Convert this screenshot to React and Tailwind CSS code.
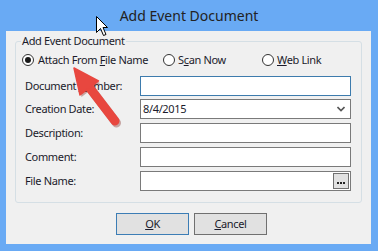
import React from "react";

function Radio({ checked }) {
  return (
    <span className="w-[12px] h-[12px] rounded-full border border-[#333] bg-white flex items-center justify-center shrink-0">
      {checked && <span className="w-[6px] h-[6px] rounded-full bg-[#1a1a1a]" />}
    </span>
  );
}

function Row({ label, mt, children }) {
  return (
    <div className={`flex items-center h-[20px] ${mt}`}>
      <div className="w-[124px] pl-[9px] leading-[20px] whitespace-nowrap">{label}</div>
      {children}
    </div>
  );
}

export default function App() {
  return (
    <div
      className="w-[378px] h-[251px] bg-[#69aaf4] flex flex-col relative overflow-hidden text-[11px] tracking-[-0.35px] text-[#1b1b2b] whitespace-nowrap"
      style={{ fontFamily: '"Noto Sans", "Open Sans", sans-serif' }}
    >
      <div className="h-[31px] flex items-center justify-center text-[14px] tracking-normal text-[#222] pb-[1px]">
        Add Event Document
      </div>
      <div className="ml-[6px] mr-[7px] h-[213px] bg-[#f0f0f0] flex flex-col">
        <fieldset className="mt-[2px] mx-[9px] h-[170px] border border-[#d5dfe5] rounded-[3px] flex flex-col">
          <legend className="ml-[5px] px-[1px] leading-[16px]">Add Event Document</legend>
          <div className="flex items-center h-[16px] mt-[3px] pl-[6px]">
            <div className="flex items-center gap-[4px] w-[141px]">
              <Radio checked />
              <span>
                Attach From <u>F</u>ile Name
              </span>
            </div>
            <div className="flex items-center gap-[3px] w-[99px]">
              <Radio />
              <span>
                S<u>c</u>an Now
              </span>
            </div>
            <div className="flex items-center gap-[3px]">
              <Radio />
              <span>
                <u>W</u>eb Link
              </span>
            </div>
          </div>
          <Row label={<span>Document <u>N</u>umber:</span>} mt="mt-[8px]">
            <div className="w-[211px] h-[20px] border border-[#3d7bad] bg-white" />
          </Row>
          <Row label="Creation Date:" mt="mt-[3px]">
            <div className="w-[211px] h-[20px] border border-[#7a7a7a] bg-white flex items-center justify-between pl-[2px] pr-[5px]">
              <span className="leading-[18px]">8/4/2015</span>
              <svg width="8" height="6" viewBox="0 0 8 6">
                <path d="M0.5 1 L4 4.5 L7.5 1" stroke="#555" strokeWidth="1.6" fill="none" />
              </svg>
            </div>
          </Row>
          <Row label="Description:" mt="mt-[4px]">
            <div className="w-[211px] h-[20px] border border-[#7a7a7a] bg-white" />
          </Row>
          <Row label="Comment:" mt="mt-[4px]">
            <div className="w-[211px] h-[20px] border border-[#7a7a7a] bg-white" />
          </Row>
          <Row label="File Name:" mt="mt-[4px]">
            <div className="w-[211px] h-[20px] border border-[#7a7a7a] bg-white flex items-center justify-end pr-[1px]">
              <div className="w-[16px] h-[16px] border border-[#707070] bg-[#e1e1e1] flex items-end justify-center pb-[4px]">
                <svg width="8" height="2" viewBox="0 0 8 2">
                  <rect x="0" y="0" width="2" height="2" fill="#222" />
                  <rect x="3" y="0" width="2" height="2" fill="#222" />
                  <rect x="6" y="0" width="2" height="2" fill="#222" />
                </svg>
              </div>
            </div>
          </Row>
        </fieldset>
        <div className="flex mt-[10px] pl-[110px] gap-[5px]">
          <button className="w-[73px] h-[22px] border border-[#3c7db5] bg-[#e1e1e1] text-[#1b1b2b]">
            <u>O</u>K
          </button>
          <button className="w-[73px] h-[22px] border border-[#707070] bg-[#e1e1e1] text-[#1b1b2b]">
            <u>C</u>ancel
          </button>
        </div>
      </div>

      <svg className="absolute left-0 top-0 pointer-events-none" width="378" height="251" viewBox="0 0 378 251">
        <g opacity="0.35" transform="translate(1.5,2)">
          <line x1="90" y1="88" x2="115" y2="121" stroke="#7a1a14" strokeWidth="9" strokeLinecap="round" />
          <polygon points="74,68 80,95 98.5,81" fill="#7a1a14" />
        </g>
        <line x1="89" y1="87" x2="115" y2="121" stroke="#e8473f" strokeWidth="9" strokeLinecap="round" />
        <polygon points="74,68 80,95 98.5,81" fill="#e8473f" stroke="#e8473f" strokeWidth="1.5" strokeLinejoin="round" />
        <g transform="translate(96.5,16.5)">
          <path d="M0 0 L0 16 L4 12 L7 19 L9.5 18 L6.5 11 L11 11 Z" fill="#fff" stroke="#000" strokeWidth="1" strokeLinejoin="miter" />
        </g>
      </svg>
    </div>
  );
}
